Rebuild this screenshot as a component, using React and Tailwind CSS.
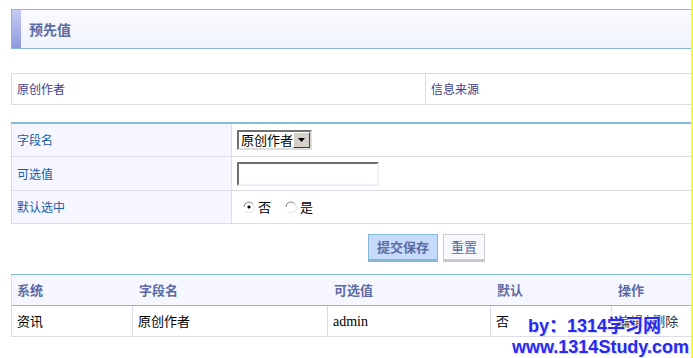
import React, { useState } from 'react';

const cjk = { fontFamily: '"Noto Sans CJK SC", "Noto Sans", sans-serif' };

// Windows-classic style radio button
const Radio = ({ checked, onClick }) => (
  <svg width="12" height="12" viewBox="0 0 12 12" onClick={onClick} className="cursor-pointer">
    <path d="M1 6a5 5 0 0 1 9-3" fill="none" stroke="#808080" strokeWidth="1" />
    <path d="M10 3a5 5 0 0 1-8 7" fill="none" stroke="#e0e0e0" strokeWidth="1" />
    <circle cx="6" cy="6" r="4" fill="#fff" />
    {checked && <circle cx="6" cy="6" r="1.6" fill="#000" />}
  </svg>
);

const App = () => {
  const [isDefault, setIsDefault] = useState(false);
  const [value, setValue] = useState('');

  const rows = [
    { sys: '资讯', field: '原创作者', val: 'admin', def: '否' },
  ];

  return (
    <div className="relative flex w-[693px] h-[358px] bg-white overflow-hidden text-[12px]" style={cjk}>
      <div className="flex-1 min-w-0 overflow-hidden pl-[11px] pt-[9px]">
        {/* Title bar */}
        <div className="flex w-[700px] h-[40px] border-y border-l border-[#86bad8] bg-gradient-to-b from-[#f9fafe] to-[#f2f4fd]">
          <div className="w-[9px] bg-gradient-to-b from-[#c6ccf6] to-[#8e99de]" />
          <h1 className="pl-[8px] flex items-center text-[14px] font-bold text-[#5b6aa5]">预先值</h1>
        </div>

        {/* Field list */}
        <div className="mt-[24px] w-[700px] flex h-[32px] border border-[#dcdce6] text-[#3d3d8f]">
          <div className="w-[414px] border-r border-[#dcdce6] flex items-center pl-[5px]">原创作者</div>
          <div className="flex-1 flex items-center pl-[5px]">信息来源</div>
        </div>

        {/* Form */}
        <div className="mt-[17px] w-[700px] border-t-2 border-[#86bad8]">
          <div className="flex h-[33px] border-b border-l border-[#dcdce6]">
            <div className="w-[220px] bg-[#f5f6fe] border-r border-[#dcdce6] flex items-center pl-[5px] text-[#1c5ca8]">字段名</div>
            <div className="flex items-center pl-[5px]">
              <div className="flex h-[20px] w-[75px] border-2 border-t-[#707070] border-l-[#707070] border-r-[#dcdcdc] border-b-[#dcdcdc] bg-white">
                <span className="flex-1 pl-[2px] text-[13px] leading-[16px] text-black">原创作者</span>
                <span className="w-[17px] bg-[#d4d0c8] border border-t-white border-l-white border-r-[#404040] border-b-[#404040] flex items-center justify-center">
                  <svg width="7" height="4" viewBox="0 0 7 4"><path d="M0 0h7L3.5 4z" fill="#000" /></svg>
                </span>
              </div>
            </div>
          </div>
          <div className="flex h-[34px] border-b border-l border-[#dcdce6]">
            <div className="w-[220px] bg-[#f5f6fe] border-r border-[#dcdce6] flex items-center pl-[5px] text-[#1c5ca8]">可选值</div>
            <div className="flex items-center pl-[5px]">
              <input
                value={value}
                onChange={(e) => setValue(e.target.value)}
                className="h-[24px] w-[142px] border-2 border-t-[#6f6f6f] border-l-[#6f6f6f] border-r-[#f0f0f8] border-b-[#f0f0f8] bg-white outline-none px-1"
              />
            </div>
          </div>
          <div className="flex h-[33px] border-b border-l border-[#dcdce6]">
            <div className="w-[220px] bg-[#f5f6fe] border-r border-[#dcdce6] flex items-center pl-[5px] text-[#1c5ca8]">默认选中</div>
            <div className="flex items-center pl-[11px] text-black text-[13px]">
              <Radio checked={!isDefault} onClick={() => setIsDefault(false)} />
              <span className="ml-[3px]">否</span>
              <span className="ml-[14px]"><Radio checked={isDefault} onClick={() => setIsDefault(true)} /></span>
              <span className="ml-[3px]">是</span>
            </div>
          </div>
        </div>

        {/* Buttons */}
        <div className="flex mt-[10px] pl-[357px] gap-[5px]">
          <button className="h-[28px] w-[70px] bg-[#c6dafc] border border-[#86bad8] border-b-[3px] border-b-[#86b8d6] text-[#5b6aa5] font-bold text-[13px]">提交保存</button>
          <button className="h-[28px] w-[42px] bg-[#f8f9fe] border border-[#cccccc] border-b-[3px] border-b-[#c8c8c8] text-[#5b6aa5] text-[13px]">重置</button>
        </div>

        {/* Result table */}
        <div className="mt-[12px] w-[700px] border-t border-[#86bad8]">
          <div className="flex h-[31px] bg-[#f5f6fe] border-l border-b border-b-[#86bad8] border-l-[#dcdce6] font-bold text-[#5b6aa5] text-[13px]">
            <div className="w-[121px] flex items-center pl-[5px]">系统</div>
            <div className="w-[195px] flex items-center pl-[6px]">字段名</div>
            <div className="w-[163px] flex items-center pl-[6px]">可选值</div>
            <div className="w-[121px] flex items-center pl-[6px]">默认</div>
            <div className="flex-1 flex items-center pl-[6px]">操作</div>
          </div>
          {rows.map((r, i) => (
            <div key={i} className="flex h-[31px] border-l border-b border-[#dcdce6] text-black text-[13px]">
              <div className="w-[121px] border-r border-[#dcdce6] flex items-center pl-[5px]">{r.sys}</div>
              <div className="w-[195px] border-r border-[#dcdce6] flex items-center pl-[5px]">{r.field}</div>
              <div className="w-[163px] border-r border-[#dcdce6] flex items-center pl-[5px] text-[14px]" style={{ fontFamily: '"Liberation Serif", serif' }}>{r.val}</div>
              <div className="w-[121px] border-r border-[#dcdce6] flex items-center pl-[5px]">{r.def}</div>
              <div className="flex-1 flex items-center pl-[5px] text-[#333]">编辑 | 删除</div>
            </div>
          ))}
        </div>
      </div>
      <div className="w-[2px] shrink-0 bg-[#ffff00]" />

      {/* Watermark */}
      <div
        className="absolute left-[512px] top-[316px] font-bold text-[18px] leading-[21px] text-[#2828ee]"
        style={{ fontFamily: '"Liberation Sans", "Noto Sans CJK SC", sans-serif', textShadow: '0 0 2px #fff, 1px 1px 0 #c8d0ff' }}
      >
        <div className="pl-[16px]">by：1314学习网</div>
        <div>www.1314Study.com</div>
      </div>
    </div>
  );
};

export default App;
